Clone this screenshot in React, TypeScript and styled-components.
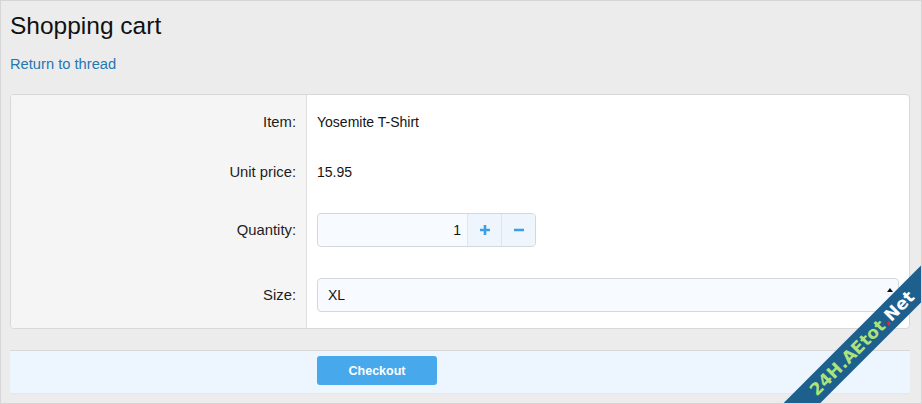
import React from "react";
import styled, { createGlobalStyle } from "styled-components";

const Global = createGlobalStyle`
  html, body { margin: 0; padding: 0; }
  body { font-family: "Liberation Sans", Arial, sans-serif; color: #141414; }
  * { box-sizing: border-box; }
`;

const Page = styled.div`
  position: relative;
  width: 922px;
  height: 404px;
  overflow: hidden;
  background: #ececec;
  border: 1px solid #d6d6d6;
  padding: 0 11px 0 9px;
`;

const Title = styled.h1`
  margin: 0;
  padding-top: 11px;
  font-size: 24.5px;
  font-weight: 400;
  line-height: 28px;
  color: #111;
`;

const BackLink = styled.a`
  display: block;
  margin-top: 15px;
  font-size: 14.7px;
  line-height: 18px;
  color: #2577b1;
  text-decoration: none;
`;

const Block = styled.div`
  margin-top: 21px;
  border: 1px solid #d8d8d8;
  border-radius: 4px;
  background: #fff;
  overflow: hidden;
`;

const Row = styled.div`
  display: grid;
  grid-template-columns: 296px 1fr;
`;

const LabelCell = styled.div<{ $top: number; $bottom?: number }>`
  background: #f5f5f5;
  border-right: 1px solid #dfdfdf;
  padding: ${(p) => p.$top}px 10px ${(p) => p.$bottom ?? 0}px 10px;
  text-align: right;
  font-size: 14.8px;
  line-height: 34px;
  color: #1d1d1d;
`;

const ValueCell = styled.div<{ $top: number; $bottom?: number }>`
  padding: ${(p) => p.$top}px 10px ${(p) => p.$bottom ?? 0}px 10px;
  font-size: 14px;
  line-height: 34px;
  color: #141414;
`;

const QtyGroup = styled.div`
  display: flex;
  width: 219px;
  height: 34px;
  border: 1px solid #d3d8dd;
  border-radius: 4px;
  background: #f7fbff;
  overflow: hidden;
`;

const QtyInput = styled.div`
  width: 149px;
  padding-right: 6px;
  text-align: right;
  line-height: 32px;
  font-size: 14px;
`;

const QtyButton = styled.button`
  width: 34px;
  height: 32px;
  padding: 0;
  border: 0;
  border-left: 1px solid #dde5ed;
  background: #eef5fc;
  display: flex;
  align-items: center;
  justify-content: center;
`;

const Select = styled.div`
  position: relative;
  height: 34px;
  border: 1px solid #d3d8dd;
  border-radius: 4px;
  background: #f7fbff;
  padding: 0 10px;
  line-height: 32px;
  font-size: 14px;
`;

const SelectArrow = styled.span`
  position: absolute;
  right: 5px;
  top: 9px;
  width: 0;
  height: 0;
  border-left: 3px solid transparent;
  border-right: 3px solid transparent;
  border-bottom: 4px solid #111;
`;

const Footer = styled.div`
  margin-top: 21px;
  display: grid;
  grid-template-columns: 307px 1fr;
  background: #edf6fe;
  border-top: 1px solid #d8d8d8;
  border-bottom: 1px solid #e4e8ec;
  padding: 5px 0 8px;
`;

const CheckoutButton = styled.button`
  grid-column: 2;
  width: 120px;
  height: 29px;
  border: 0;
  border-radius: 3px;
  background: #47a8eb;
  color: #fff;
  font-family: "Liberation Sans", Arial, sans-serif;
  font-size: 12.5px;
  font-weight: 700;
`;

const Ribbon = styled.div`
  position: absolute;
  left: 701px;
  top: 329px;
  width: 320px;
  height: 26px;
  background: #1d5f8d;
  transform: rotate(-45deg);
  display: flex;
  align-items: center;
  justify-content: center;
  font-family: "DejaVu Sans", "Liberation Sans", sans-serif;
  font-weight: 700;
  font-size: 17px;
  letter-spacing: 0.2px;
  color: #aee37c;
  white-space: nowrap;
`;

const Dot = styled.span`
  color: #e0213b;
`;

const White = styled.span`
  color: #fff;
`;

const Plus = () => (
  <svg width="12" height="12" viewBox="0 0 12 12">
    <path d="M6 1v10M1 6h10" stroke="#3d9ee3" strokeWidth="2.6" />
  </svg>
);

const Minus = () => (
  <svg width="12" height="12" viewBox="0 0 12 12">
    <path d="M1 6h10" stroke="#3d9ee3" strokeWidth="2.6" />
  </svg>
);

export default function App() {
  return (
    <>
      <Global />
      <Page>
        <Title>Shopping cart</Title>
        <BackLink href="#">Return to thread</BackLink>
        <Block>
          <Row>
            <LabelCell $top={10}>Item:</LabelCell>
            <ValueCell $top={10}>Yosemite T-Shirt</ValueCell>
          </Row>
          <Row>
            <LabelCell $top={16}>Unit price:</LabelCell>
            <ValueCell $top={16}>15.95</ValueCell>
          </Row>
          <Row>
            <LabelCell $top={24}>Quantity:</LabelCell>
            <ValueCell $top={24}>
              <QtyGroup>
                <QtyInput>1</QtyInput>
                <QtyButton aria-label="increase"><Plus /></QtyButton>
                <QtyButton aria-label="decrease"><Minus /></QtyButton>
              </QtyGroup>
            </ValueCell>
          </Row>
          <Row>
            <LabelCell $top={31} $bottom={16}>Size:</LabelCell>
            <ValueCell $top={31} $bottom={16}>
              <Select>
                XL
                <SelectArrow />
              </Select>
            </ValueCell>
          </Row>
        </Block>
        <Footer>
          <CheckoutButton>Checkout</CheckoutButton>
        </Footer>
        <Ribbon>
          24H.AEtot<Dot>.</Dot><White>Net</White>
        </Ribbon>
      </Page>
    </>
  );
}
